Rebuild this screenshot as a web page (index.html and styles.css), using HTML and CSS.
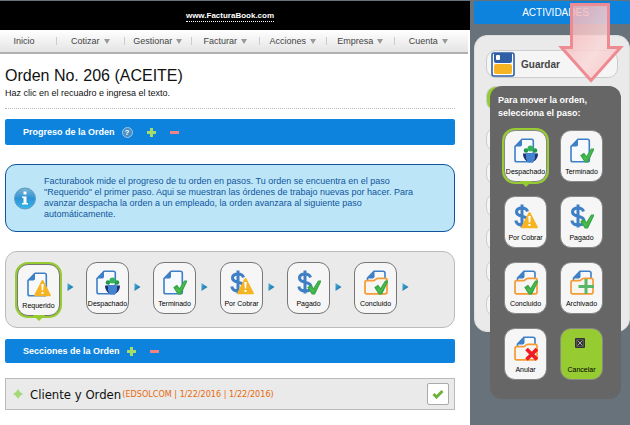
FILE: index.html
```html
<!DOCTYPE html>
<html lang="es">
<head>
    <meta charset="UTF-8">
    <meta name="viewport" content="width=device-width, initial-scale=1.0">
    <title>Orden No. 206 - FacturaBook</title>
    <link rel="stylesheet" href="styles.css">
</head>
<body>
    <!-- Shared icons -->
    <svg class="sprite" aria-hidden="true">
        <defs>
            <linearGradient id="check-fill" x1="0" y1="0" x2="1" y2="1">
                <stop offset="0" stop-color="#1f9434"/>
                <stop offset="0.5" stop-color="#4fbf50"/>
                <stop offset="1" stop-color="#2a9a3c"/>
            </linearGradient>
            <linearGradient id="info-fill" x1="0" y1="0" x2="0" y2="1">
                <stop offset="0" stop-color="#7fb4d4"/>
                <stop offset="0.5" stop-color="#2b93d6"/>
                <stop offset="1" stop-color="#37b9ea"/>
            </linearGradient>
            <linearGradient id="next-fill" x1="0" y1="0" x2="1" y2="1">
                <stop offset="0" stop-color="#4cb4e4"/>
                <stop offset="1" stop-color="#0f5f93"/>
            </linearGradient>
            <linearGradient id="arrow-fill" x1="0" y1="0" x2="1" y2="1">
                <stop offset="0" stop-color="#f6a9ae"/>
                <stop offset="0.6" stop-color="#f9d8d8"/>
                <stop offset="1" stop-color="#f6bcbf"/>
            </linearGradient>
        </defs>
        <symbol id="doc" viewBox="0 0 24 25">
            <path d="M8 1.2h9.5q1.8 0 1.8 1.8v19q0 1.8-1.8 1.8H2.8Q1 23.800 1 22V8.500z" fill="#f6f9fd" stroke="#3f7fc6" stroke-width="1.600" stroke-linejoin="round"/>
            <path d="M8 1v5.700q0 1.800-1.800 1.800H.8z" fill="#3f7fc6"/>
        </symbol>
        <symbol id="dollar" viewBox="0 0 24 25">
            <path d="M13.500 7.500Q12.500 4 8 4 2.500 4 2.500 8q0 3 5.500 4.200 6 1.300 6 4.800 0 4-5.800 4Q2.500 21 1.800 16.500M8 .5v23" fill="none" stroke="#3f7fc6" stroke-width="3"/>
        </symbol>
        <symbol id="folder" viewBox="0 0 24 25">
            <path d="M10 1.200h9q2 0 2 2V11H3.500V8z" fill="#f6f9fd" stroke="#3f7fc6" stroke-width="1.600"/>
            <path d="M10.500 1v5.500q0 2-2 2H3z" fill="#3f7fc6"/>
            <path d="M1 22v-9.500q0-1.800 1.800-1.800H9q1.500 0 2.500-1.200T14 8.300h7.200q1.800 0 1.800 1.800V22q0 1.800-1.800 1.800H2.800Q1 23.800 1 22z" fill="#f7f5f2" stroke="#f49b34" stroke-width="1.700" stroke-linejoin="round"/>
        </symbol>
        <symbol id="warning" viewBox="0 0 24 25">
            <path d="M15.500 9 22.800 23.300H8.200z" fill="#f6b422" stroke="#f6b422" stroke-width="2" stroke-linejoin="round"/>
            <path d="M14.300 12h2.400l-.5 6.500h-1.400zM14.500 20h2v2h-2z" fill="#fff"/>
        </symbol>
        <symbol id="check" viewBox="0 0 24 25">
            <path d="m11 17.500 3-2 2.500 3.500L21.500 11h2.300L17.500 24h-2.300z" fill="url(#check-fill)" stroke="#35a544" stroke-width="1.200" stroke-linejoin="round"/>
        </symbol>
        <symbol id="people" viewBox="0 0 24 25">
            <circle cx="12" cy="12.500" r="2.300" fill="#25994b"/>
            <circle cx="21" cy="12.500" r="2.300" fill="#25994b"/>
            <circle cx="16.500" cy="10.500" r="3" fill="#35b35a"/>
            <path d="M9 15.500h5V23h-1.500Q9 20 9 15.500zM19 15.500h5q0 4.500-3.500 7.500H19z" fill="#1f2f73"/>
            <path d="M12 15h9v5.500l-2 4h-5l-2-4z" fill="#4382cf"/>
        </symbol>
        <symbol id="icon-requerido" viewBox="0 0 24 25">
            <use href="#doc"/><use href="#warning"/>
        </symbol>
        <symbol id="icon-despachado" viewBox="0 0 24 25">
            <use href="#doc"/><use href="#people"/>
        </symbol>
        <symbol id="icon-terminado" viewBox="0 0 24 25">
            <use href="#doc"/><use href="#check"/>
        </symbol>
        <symbol id="icon-cobrar" viewBox="0 0 24 25">
            <use href="#dollar"/><use href="#warning"/>
        </symbol>
        <symbol id="icon-pagado" viewBox="0 0 24 25">
            <use href="#dollar"/><use href="#check"/>
        </symbol>
        <symbol id="icon-concluido" viewBox="0 0 24 25">
            <use href="#folder"/><use href="#check"/>
        </symbol>
        <symbol id="icon-archivado" viewBox="0 0 24 25">
            <use href="#folder"/>
            <path d="M16 9v15M8.500 16.500H24" stroke="#58b868" stroke-width="3"/>
        </symbol>
        <symbol id="icon-anular" viewBox="0 0 24 25">
            <use href="#folder"/>
            <path d="m12.500 13 10.500 10.500m0-10.500-10.500 10.500" stroke="#ee1c25" stroke-width="3.800"/>
        </symbol>
        <symbol id="icon-next" viewBox="0 0 7 8">
            <path d="M.5 0 6.500 4l-6 4z" fill="url(#next-fill)"/>
        </symbol>
        <symbol id="icon-plus" viewBox="0 0 9 9">
            <path d="M3 0h3v3h3v3H6v3H3V6H0V3h3z" fill="#a5dd6a"/>
        </symbol>
        <symbol id="icon-minus" viewBox="0 0 9 9">
            <path d="M0 3h9v3H0z" fill="#ee8484"/>
        </symbol>
    </svg>

    <main class="main">
        <header class="top-bar">
            <a href="#">www.FacturaBook.com</a>
        </header>

        <nav class="menu">
            <a href="#">Inicio</a>
            <a href="#">Cotizar<span class="caret"></span></a>
            <a href="#">Gestionar<span class="caret"></span></a>
            <a href="#">Facturar<span class="caret"></span></a>
            <a href="#">Acciones<span class="caret"></span></a>
            <a href="#">Empresa<span class="caret"></span></a>
            <a href="#">Cuenta<span class="caret"></span></a>
        </nav>

        <div class="content">
            <div class="page-title">
                <h1>Orden No. 206 (ACEITE)</h1>
                <p>Haz clic en el recuadro e ingresa el texto.</p>
            </div>

            <div class="section-bar progress-bar">
                <h2>Progreso de la Orden</h2>
                <button class="help" aria-label="Ayuda">?</button>
                <button class="toggle" aria-label="Expandir progreso"><svg><use href="#icon-plus"/></svg></button>
                <button class="toggle" aria-label="Contraer progreso"><svg><use href="#icon-minus"/></svg></button>
            </div>

            <div class="info">
                <svg class="info-icon" viewBox="0 0 22 23" aria-hidden="true">
                    <circle cx="11" cy="11.500" r="10.500" fill="url(#info-fill)" stroke="#5e9cc0"/>
                    <path d="M9.500 4.500h3v3h-3zM8 9.500h4.500V16H14v1.500H8V16h1.500v-5H8z" fill="#fff"/>
                </svg>
                <p>Facturabook mide el progreso de tu orden en pasos. Tu orden se encuentra en el paso "Requerido" el primer paso. Aqui se muestran las órdenes de trabajo nuevas por hacer. Para avanzar despacha la orden a un empleado, la orden avanzara al siguiente paso automáticamente.</p>
            </div>

            <div class="steps">
                <button class="step current"><svg><use href="#icon-requerido"/></svg>Requerido</button>
                <svg class="next"><use href="#icon-next"/></svg>
                <button class="step"><svg><use href="#icon-despachado"/></svg>Despachado</button>
                <svg class="next"><use href="#icon-next"/></svg>
                <button class="step"><svg><use href="#icon-terminado"/></svg>Terminado</button>
                <svg class="next"><use href="#icon-next"/></svg>
                <button class="step"><svg><use href="#icon-cobrar"/></svg>Por Cobrar</button>
                <svg class="next"><use href="#icon-next"/></svg>
                <button class="step"><svg><use href="#icon-pagado"/></svg>Pagado</button>
                <svg class="next"><use href="#icon-next"/></svg>
                <button class="step"><svg><use href="#icon-concluido"/></svg>Concluido</button>
                <svg class="next"><use href="#icon-next"/></svg>
            </div>

            <div class="section-bar">
                <h2>Secciones de la Orden</h2>
                <button class="toggle" aria-label="Expandir secciones"><svg><use href="#icon-plus"/></svg></button>
                <button class="toggle" aria-label="Contraer secciones"><svg><use href="#icon-minus"/></svg></button>
            </div>

            <div class="order-section">
                <svg class="expand" viewBox="0 0 10 10" aria-hidden="true">
                    <path d="M5 0 7 3 10 5 7 7 5 10 3 7 0 5 3 3z" fill="#a3d977"/>
                    <path d="M4 2h2v2h2v2H6v2H4V6H2V4h2z" fill="#a3d977"/>
                </svg>
                <h3>Cliente y Orden</h3>
                <span class="details">(EDSOLCOM | 1/22/2016 | 1/22/2016)</span>
                <button class="done" aria-label="Completar">
                    <svg viewBox="0 0 12 10"><path d="m1.500 5 3 3L10.500 2" fill="none" stroke="#6fb03c" stroke-width="3"/></svg>
                </button>
            </div>
        </div>
    </main>

    <aside class="sidebar">
        <h2 class="sidebar-title">ACTIVIDADES</h2>
        <div class="activities">
            <button class="activity save">
                <svg viewBox="0 0 24 25" aria-hidden="true">
                    <rect x="1" y="1" width="22" height="23" rx="2" fill="#fff" stroke="#2f5fa5" stroke-width="1.600"/>
                    <path d="M3 1h18v8q0 2-2 2H5q-2 0-2-2z" fill="#2f5fa5"/>
                    <rect x="5" y="3" width="4" height="5" rx="1" fill="#fff"/>
                    <rect x="3" y="12" width="18" height="10" rx="2" fill="#f6b422"/>
                </svg>
                Guardar
            </button>
            <button class="activity selected" aria-label="Mover orden"></button>
            <button class="activity" aria-label="Imprimir"></button>
            <button class="activity" aria-label="Enviar"></button>
            <button class="activity" aria-label="Copiar"></button>
            <button class="activity" aria-label="Adjuntar"></button>
            <button class="activity" aria-label="Historial"></button>
            <button class="activity" aria-label="Notas"></button>
        </div>

        <div class="move-menu">
            <p>Para mover la orden, selecciona el paso:</p>
            <div class="move-grid">
                <button class="step current"><svg><use href="#icon-despachado"/></svg>Despachado</button>
                <button class="step"><svg><use href="#icon-terminado"/></svg>Terminado</button>
                <button class="step"><svg><use href="#icon-cobrar"/></svg>Por Cobrar</button>
                <button class="step"><svg><use href="#icon-pagado"/></svg>Pagado</button>
                <button class="step"><svg><use href="#icon-concluido"/></svg>Concluido</button>
                <button class="step"><svg><use href="#icon-archivado"/></svg>Archivado</button>
                <button class="step"><svg><use href="#icon-anular"/></svg>Anular</button>
                <button class="step cancel">
                    <svg viewBox="0 0 24 25">
                        <rect x="5" y="2" width="10" height="10" rx="1" fill="#333"/>
                        <path d="m7.500 4.500 5 5m0-5-5 5" stroke="#aaa"/>
                        <path d="M6.500 3.500h7v7h-7z" fill="none" stroke="#555"/>
                    </svg>Cancelar
                </button>
            </div>
        </div>

        <svg class="pointer" viewBox="0 0 66 80" aria-hidden="true">
            <path d="M13.500 1.500h37v43h12L33 77.500 3.500 44.500h10z" fill="url(#arrow-fill)" fill-opacity="0.850" stroke="#ee8b92" stroke-width="3"/>
        </svg>
    </aside>
</body>
</html>
```

FILE: styles.css
```css
/* General styling */
* {
    box-sizing: border-box;
}
body {
    display: flex;
    min-height: 100vh;
    margin: 0;
    padding-top: 1px;
    background-color: #67727b;
    font-family: "Liberation Sans", Arial, sans-serif;
    font-size: 9px;
    color: #111;
}
h1, h2, h3, p {
    margin: 0;
}
button {
    padding: 0;
    border: none;
    background: none;
    font-family: inherit;
    cursor: pointer;
}
.sprite {
    position: absolute;
    width: 0;
    height: 0;
}

/* Header and menu */
.main {
    flex: 1;
    background-color: #fff;
}
.top-bar {
    display: flex;
    justify-content: center;
    height: 29px;
    padding: 9px 10px 0 0;
    background-color: #000;
}
.top-bar a {
    height: 12px;
    border-bottom: 1px dotted #fff;
    color: #fff;
    font-size: 8px;
    font-weight: bold;
    line-height: 12px;
    text-decoration: none;
}
.menu {
    display: grid;
    grid-template-columns: 57px repeat(6, 1fr);
    align-items: center;
    height: 24px;
    margin-right: 2px;
    padding-right: 6px;
    border-bottom: 2px solid #b0b0b0;
    background: linear-gradient(#fff, #e4e4e4);
}
.menu a {
    display: flex;
    justify-content: center;
    align-items: center;
    gap: 4px;
    height: 8px;
    border-right: 1px solid #ccc;
    color: #444;
    text-decoration: none;
}
.menu a:first-child {
    padding-right: 8px;
}
.menu a:last-child {
    border-right: none;
}
.caret {
    border: 3px solid transparent;
    border-top: 5px solid #999;
    border-bottom: none;
}

/* Order page */
.content {
    padding: 11px 15px 15px 5px;
}
.page-title {
    margin-bottom: 10px;
    padding-bottom: 9px;
    border-bottom: 1px dotted #bbb;
}
.page-title h1 {
    font-size: 16px;
    font-weight: normal;
    line-height: 22px;
}
.page-title p {
    line-height: 12px;
}
.section-bar {
    display: flex;
    align-items: center;
    gap: 14px;
    height: 24px;
    padding-left: 18px;
    border-radius: 2px;
    background-color: #0e83de;
    color: #fff;
}
.section-bar h2 {
    margin-right: -7px;
    font-size: 9px;
}
.progress-bar {
    height: 26px;
}
.help {
    width: 11px;
    height: 11px;
    border: 1px solid #9cc8ea;
    border-radius: 50%;
    background-color: #4a8fc4;
    color: #fff;
    font-size: 8px;
    font-weight: bold;
    line-height: 9px;
}
.toggle, .toggle svg {
    display: block;
    width: 9px;
    height: 9px;
}
.info {
    display: flex;
    align-items: center;
    gap: 8px;
    margin: 19px 0;
    padding: 11px 20px 11px 8px;
    border: 1px solid #10559c;
    border-radius: 11px;
    background-color: #bde5f8;
    color: #10559c;
    line-height: 11px;
}
.info-icon {
    flex: none;
    width: 22px;
    height: 23px;
}

/* Step tiles */
.steps {
    display: flex;
    align-items: flex-start;
    height: 77px;
    margin-bottom: 11px;
    padding: 10px 0 0 11px;
    border: 1px solid #bbb;
    border-radius: 12px;
    background-color: #eaeaea;
}
.step {
    position: relative;
    display: flex;
    flex-direction: column;
    align-items: center;
    gap: 4px;
    width: 43px;
    height: 52px;
    padding-top: 7px;
    border: 1px solid #777;
    border-radius: 11px;
    background-color: #f6f6f6;
    color: #000;
    font-size: 7px;
    line-height: 10px;
    white-space: nowrap;
}
.step svg {
    flex: none;
    width: 24px;
    height: 25px;
}
.step.current {
    box-shadow: 0 0 0 2px #97cb32;
}
.steps .current {
    margin: 2px 2px 0 0;
}
.step.current::after {
    content: "";
    position: absolute;
    top: 100%;
    left: 50%;
    margin-left: -6px;
    border: 6px solid transparent;
    border-top-color: #97cb32;
    border-bottom: none;
}
.next {
    width: 7px;
    height: 8px;
    margin: 21px 12px 0 5px;
}

/* Collapsed order section */
.order-section {
    display: flex;
    align-items: center;
    height: 32px;
    margin-top: 15px;
    padding: 0 5px 0 7px;
    border: 1px solid #bbb;
    background-color: #eaeaea;
    font-family: "DejaVu Sans Condensed", "DejaVu Sans", Tahoma, sans-serif;
}
.expand {
    width: 10px;
    height: 10px;
    margin-right: 7px;
}
.order-section h3 {
    font-size: 13px;
    font-weight: normal;
}
.details {
    margin-left: 1px;
    color: #e8690b;
}
.done {
    display: flex;
    justify-content: center;
    align-items: center;
    width: 22px;
    height: 22px;
    margin-left: auto;
    border: 1px solid #aaa;
    border-radius: 2px;
    background-color: #fff;
}
.done svg {
    width: 12px;
    height: 10px;
}

/* Sidebar */
.sidebar {
    position: relative;
    width: 160px;
    padding-left: 4px;
}
.sidebar-title {
    height: 23px;
    padding-left: 7px;
    border-radius: 2px;
    background-color: #0e83de;
    color: #fff;
    font-size: 10px;
    font-weight: normal;
    line-height: 23px;
    text-align: center;
}
.activities {
    display: flex;
    flex-direction: column;
    gap: 8px;
    margin-top: 11px;
    padding: 14px 11px;
    border: 1px solid #ddd;
    border-radius: 13px;
    background-color: #eaeaea;
}
.activity {
    display: flex;
    align-items: center;
    gap: 6px;
    height: 25px;
    padding-left: 4px;
    border: 1px solid #ccc;
    border-radius: 10px;
    background-color: #f5f5f5;
    color: #444;
    font-size: 10px;
    font-weight: bold;
}
.activity svg {
    width: 24px;
    height: 25px;
}
.activity.save {
    height: 28px;
}
.activity.selected {
    margin-bottom: 8px;
    background-color: #97cb32;
}

/* Menu for moving the order, opens over the activities */
.move-menu {
    position: absolute;
    top: 85px;
    left: 20px;
    right: 9px;
    padding: 8px 8px 19px;
    border-radius: 12px;
    background-color: #666;
}
.move-menu p {
    color: #fff;
    font-weight: bold;
    line-height: 13px;
}
.move-grid {
    display: grid;
    grid-template-columns: 43px 43px;
    gap: 14px 13px;
    margin: 10px 0 0 6px;
}
.move-grid .step {
    border-color: #888;
}
.move-grid .cancel {
    background-color: #97cb32;
}

/* Arrow pointing to the menu */
.pointer {
    position: absolute;
    top: 2px;
    right: 6px;
    width: 66px;
    height: 80px;
}
```
